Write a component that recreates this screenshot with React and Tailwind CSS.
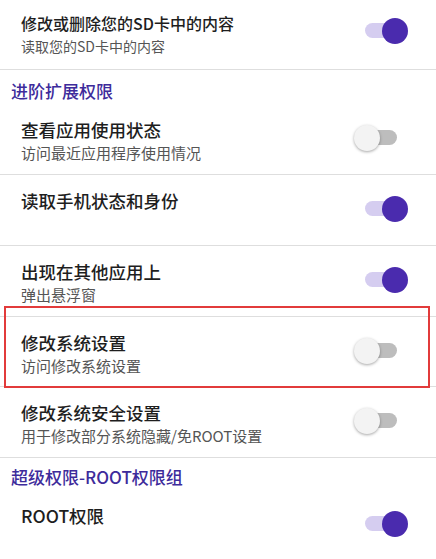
import React from 'react'

const font = { fontFamily: '"Noto Sans CJK SC", "Noto Sans", sans-serif' }

function Toggle({ on }) {
  return (
    <div className="relative w-[54px] h-[26px] shrink-0 mt-[7px] mr-[28px]">
      <div className={`absolute left-[11px] top-[5px] w-[32px] h-[15px] rounded-full ${on ? 'bg-[#d5cdf0]' : 'bg-[#bdbdbd]'}`} />
      {on ? (
        <div className="absolute right-0 top-0 w-[26px] h-[26px] rounded-full bg-[#4a2bae]" />
      ) : (
        <div className="absolute left-0 top-0 w-[26px] h-[26px] rounded-full bg-[#f3f3f3] shadow-[0_1px_3px_rgba(0,0,0,0.35)]" />
      )}
    </div>
  )
}

function Row({ title, sub, on, first, short }) {
  const height = first ? 'h-[69px] pt-[11px]' : short ? 'h-[69px] pt-[14px]' : 'h-[70px] pt-[14px]'
  return (
    <div className={`flex items-start justify-between pl-[21px] ${height}`}>
      <div className="flex flex-col">
        <div className={`leading-[24px] font-medium text-[#1e1e1e] ${first ? 'text-[16px]' : 'text-[17.5px]'}`}>{title}</div>
        {sub && <div className={`leading-[20px] mt-[1px] text-[#555555] ${first ? 'text-[14px]' : 'text-[15px]'}`}>{sub}</div>}
      </div>
      <Toggle on={on} />
    </div>
  )
}

function Divider() {
  return <div className="h-px bg-[#dedede]" />
}

function Header({ children, tight }) {
  return (
    <div className={`pl-[11px] text-[17px] leading-[24px] font-medium text-[#3d2b9b] ${tight ? 'h-[32px] pt-[7px]' : 'h-[34px] pt-[9px]'}`}>
      {children}
    </div>
  )
}

export default function App() {
  return (
    <div className="w-[436px] h-[559px] bg-white overflow-hidden" style={font}>
      <Row first title="修改或删除您的SD卡中的内容" sub="读取您的SD卡中的内容" on />
      <Divider />
      <Header>进阶扩展权限</Header>
      <Row title="查看应用使用状态" sub="访问最近应用程序使用情况" on={false} />
      <Divider />
      <Row title="读取手机状态和身份" on />
      <Divider />
      <Row title="出现在其他应用上" sub="弹出悬浮窗" on />
      <div className="relative">
        <div className="absolute left-[4px] right-[6px] -top-[10px] h-[82px] border-2 border-[#e23b3b] pointer-events-none z-10" />
        <Divider />
        <Row short title="修改系统设置" sub="访问修改系统设置" on={false} />
      </div>
      <Divider />
      <Row title="修改系统安全设置" sub="用于修改部分系统隐藏/免ROOT设置" on={false} />
      <Divider />
      <Header tight>超级权限-ROOT权限组</Header>
      <Row title="ROOT权限" on />
    </div>
  )
}
